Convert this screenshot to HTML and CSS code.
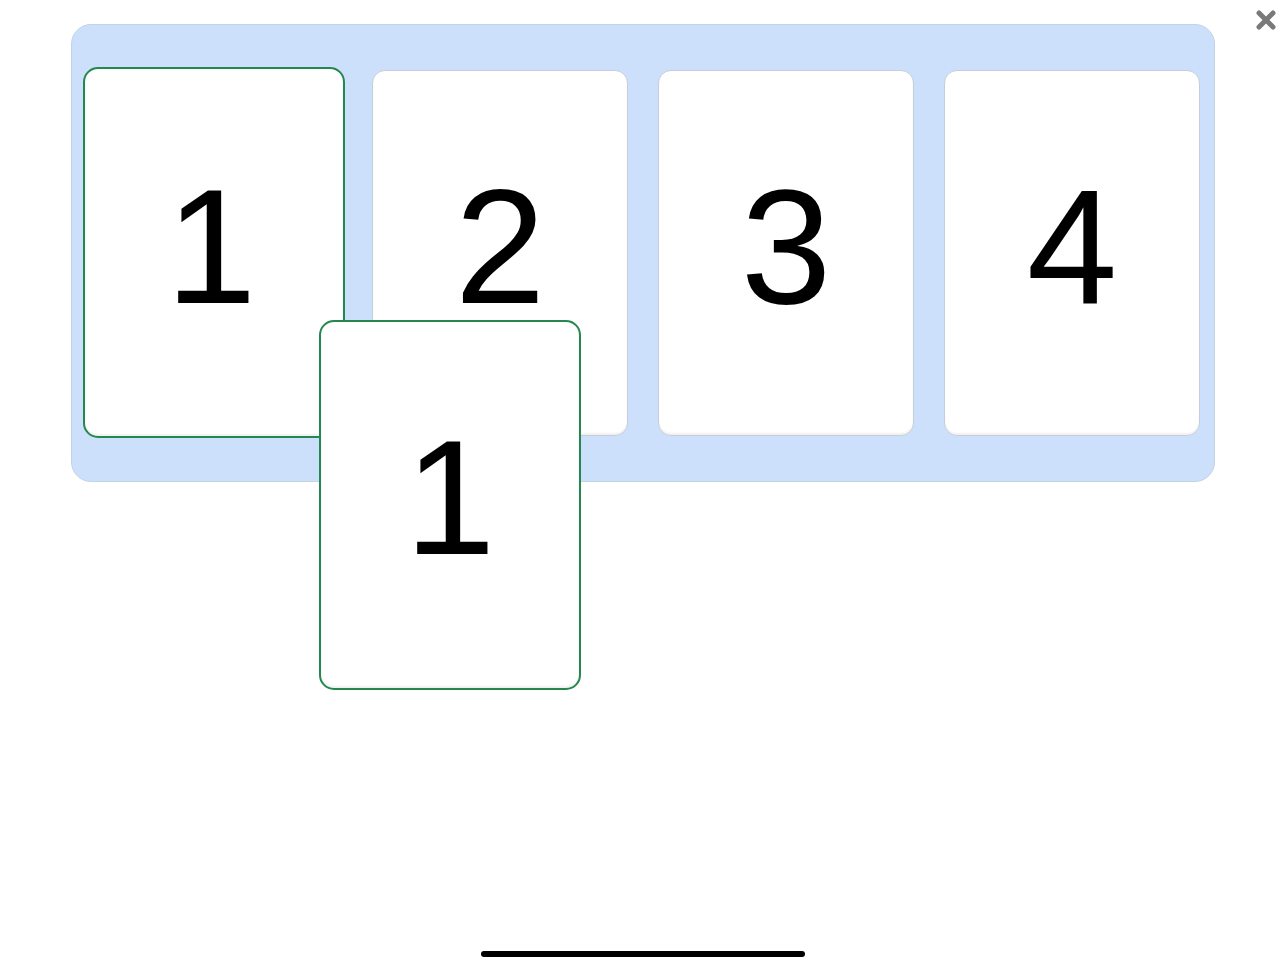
FILE: index.html
```html
<!DOCTYPE html>
<html>
<head>
<meta charset="utf-8">
<link rel="stylesheet" href="styles.css">
</head>
<body>
<div class="screen">
  <button class="close" aria-label="Close">
    <svg width="22" height="22" viewBox="0 0 22 22"><path d="M4 4 L18 18 M18 4 L4 18" stroke="#7a7a7a" stroke-width="5" stroke-linecap="round"/></svg>
  </button>
  <div class="tray">
    <div class="card selected"><span class="digit">1</span></div>
    <div class="card"><span class="digit">2</span></div>
    <div class="card"><span class="digit">3</span></div>
    <div class="card"><span class="digit">4</span></div>
  </div>
  <div class="card dragging"><span class="digit">1</span></div>
  <div class="home-bar"></div>
</div>
</body>
</html>
```
FILE: styles.css
```css
html, body {
  margin: 0;
  padding: 0;
  background: #ffffff;
}
.screen {
  position: relative;
  width: 1286px;
  height: 964px;
  overflow: hidden;
  font-family: "Liberation Sans", Arial, sans-serif;
}
.close {
  position: absolute;
  top: 9px;
  right: 9px;
  width: 22px;
  height: 22px;
  padding: 0;
  border: 0;
  background: none;
}
.close svg { display: block; }
.tray {
  margin: 24px 0 0 71px;
  width: 1144px;
  height: 458px;
  box-sizing: border-box;
  padding: 45px 14px;
  display: flex;
  gap: 30px;
  background: #cce0fb;
  border: 1px solid #c3d3e6;
  border-radius: 20px;
}
.card {
  flex: 0 0 256px;
  height: 366px;
  box-sizing: border-box;
  background: #ffffff;
  border: 1px solid #c6ced8;
  border-radius: 13px;
  display: flex;
  justify-content: center;
  padding-top: 94px;
  box-shadow: inset 0 -2px 2px rgba(0,0,0,0.06);
}
.digit {
  font-size: 163px;
  line-height: 1;
  color: #000;
}
.card.selected {
  flex-basis: 262px;
  height: 371px;
  margin: -3px -3px -2px -3px;
  border: 2px solid #23874f;
  border-radius: 15px;
  padding-top: 96px;
  padding-right: 6px;
}
.card.dragging {
  position: absolute;
  left: 319px;
  top: 320px;
  width: 262px;
  height: 370px;
  border: 2px solid #23874f;
  border-radius: 15px;
  padding-top: 94px;
}
.home-bar {
  position: absolute;
  left: 481px;
  top: 951px;
  width: 324px;
  height: 6px;
  border-radius: 3px;
  background: #000;
}
```
